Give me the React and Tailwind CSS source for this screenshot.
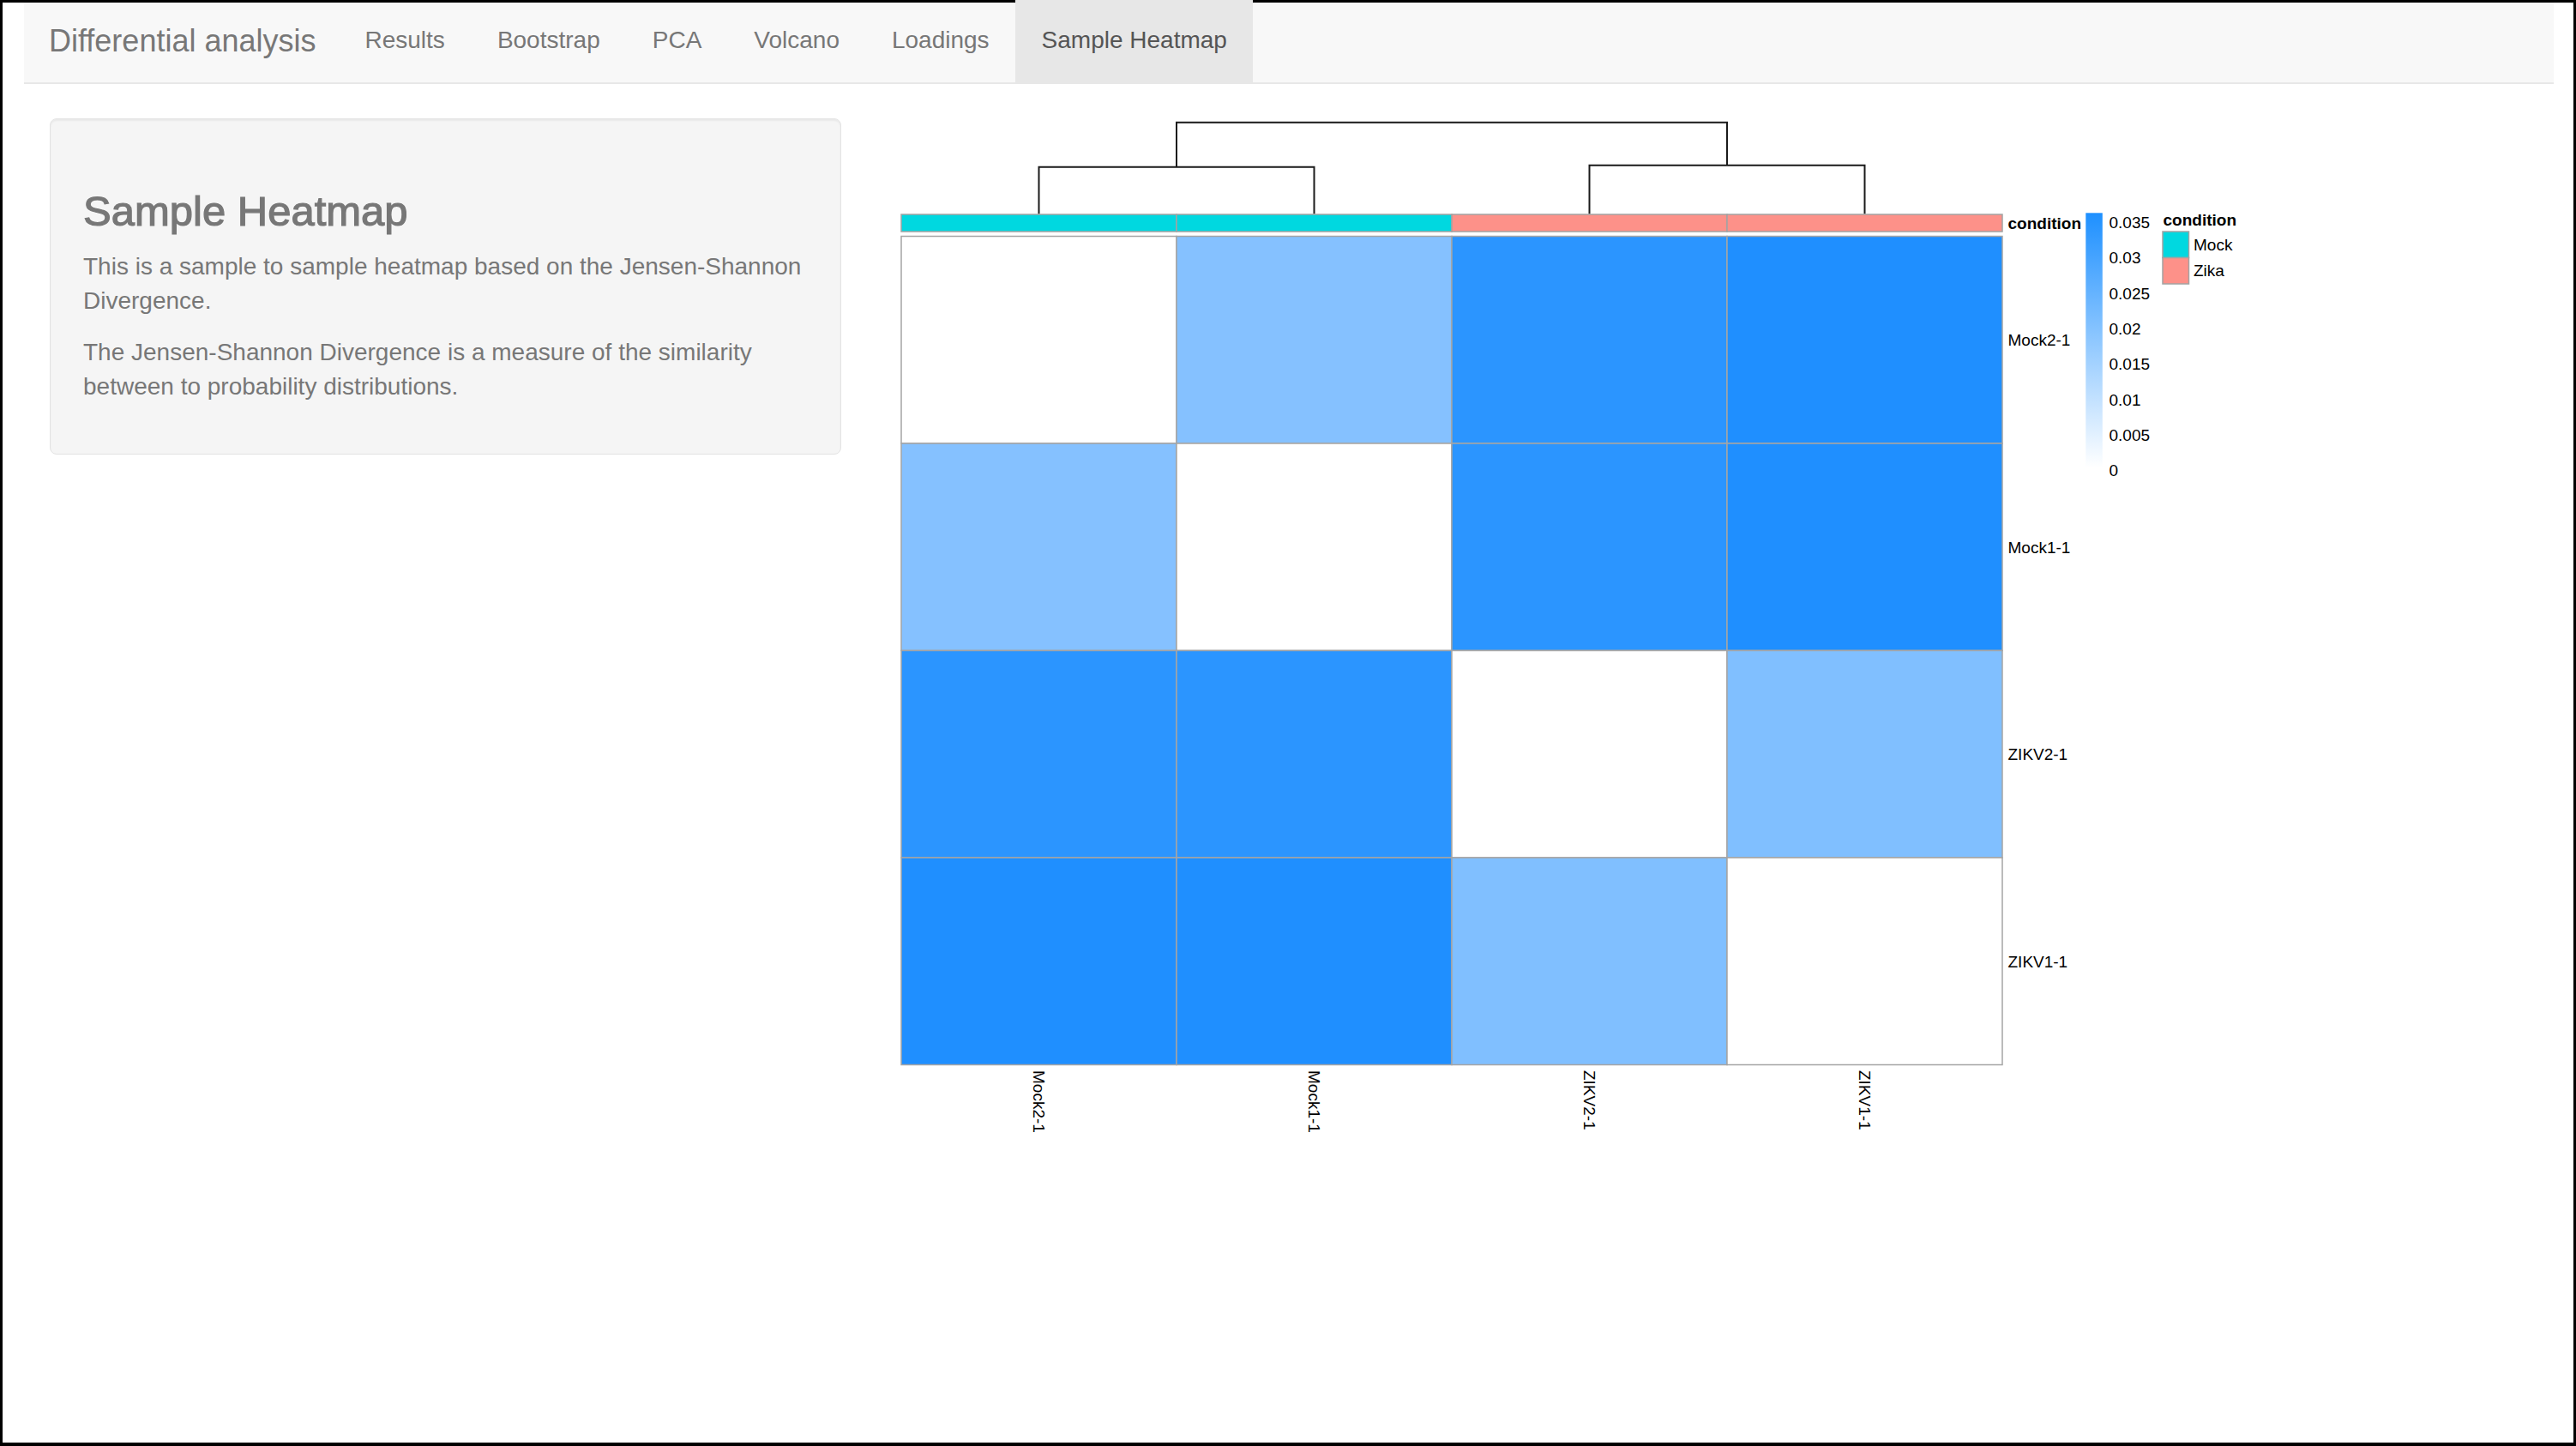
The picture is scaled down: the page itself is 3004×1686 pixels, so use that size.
import React from "react";

const TABS = ["Results", "Bootstrap", "PCA", "Volcano", "Loadings", "Sample Heatmap"];

const W = "#ffffff";
const L1 = "#85c1ff";
const M = "#2b95ff";
const D = "#1f8fff";
const L2 = "#80bfff";
const MATRIX = [
  [W, L1, M, D],
  [L1, W, M, D],
  [M, M, W, L2],
  [D, D, L2, W],
];
const NAMES = ["Mock2-1", "Mock1-1", "ZIKV2-1", "ZIKV1-1"];
const COND = ["#00d8e0", "#00d8e0", "#fd9189", "#fd9189"];
const TICKS = ["0.035", "0.03", "0.025", "0.02", "0.015", "0.01", "0.005", "0"];

const GX = 10;
const CW = 321;
const GY = 137.5;
const RH = 241.5;
const FONT = "'Liberation Sans', Arial, sans-serif";

function Heatmap() {
  const centers = [0, 1, 2, 3].map((i) => GX + CW * i + CW / 2);
  return (
    <svg width="1640" height="1200" viewBox="0 0 1640 1200" fontFamily={FONT}>
      <defs>
        <linearGradient id="cbar" x1="0" y1="0" x2="0" y2="1">
          <stop offset="0%" stopColor="#1e90ff" />
          <stop offset="100%" stopColor="#ffffff" />
        </linearGradient>
      </defs>

      {/* dendrogram */}
      <g stroke="#1a1a1a" strokeWidth="2" fill="none">
        <path d={`M${centers[0]},111.5 V56.7 H${centers[1]} V111.5`} />
        <path d={`M${centers[2]},111.5 V54.7 H${centers[3]} V111.5`} />
        <path d={`M${(centers[0] + centers[1]) / 2},56.7 V4.7 H${(centers[2] + centers[3]) / 2} V54.7`} />
      </g>

      {/* condition annotation bar */}
      {COND.map((c, i) => (
        <rect key={i} x={GX + CW * i} y={112} width={CW} height={20} fill={c} stroke="#a3a3a3" strokeWidth="1.5" />
      ))}
      <text x="1300.5" y="129.3" fontSize="19" fontWeight="bold" fill="#000">condition</text>

      {/* cells */}
      {MATRIX.map((row, r) =>
        row.map((c, k) => (
          <rect key={`${r}-${k}`} x={GX + CW * k} y={GY + RH * r} width={CW} height={RH} fill={c} stroke="#a5a5a5" strokeWidth="1.5" />
        ))
      )}

      {/* row labels */}
      {NAMES.map((n, r) => (
        <text key={n} x="1300.5" y={GY + RH * r + RH / 2 + 7} fontSize="19" fill="#000">{n}</text>
      ))}

      {/* column labels */}
      {NAMES.map((n, k) => (
        <text
          key={n}
          x={centers[k]}
          y="1110"
          fontSize="19"
          fill="#000"
          dominantBaseline="central"
          transform={`rotate(90 ${centers[k]} 1110)`}
        >
          {n}
        </text>
      ))}

      {/* colour scale */}
      <rect x="1391.3" y="110.3" width="19.5" height="297" fill="url(#cbar)" />
      {TICKS.map((t, i) => (
        <text key={t} x="1418.5" y={128 + i * 41.3} fontSize="19" fill="#000">{t}</text>
      ))}

      {/* annotation legend */}
      <text x="1481.5" y="124.7" fontSize="19" fontWeight="bold" fill="#000">condition</text>
      <rect x="1481" y="132" width="30.5" height="30.5" fill="#00d8e0" stroke="#a3a3a3" strokeWidth="1.5" />
      <rect x="1481" y="162.5" width="30.5" height="30.5" fill="#fd9189" stroke="#a3a3a3" strokeWidth="1.5" />
      <text x="1517" y="154.3" fontSize="19" fill="#000">Mock</text>
      <text x="1517" y="184.3" fontSize="19" fill="#000">Zika</text>
    </svg>
  );
}

export default function App() {
  return (
    <div className="w-[3004px] h-[1686px] bg-white border-[3px] border-b-4 border-black font-['Liberation_Sans',Arial,sans-serif]">
      <nav className="ml-[25px] mr-[23px] h-[95px] bg-[#f8f8f8] border-b-2 border-[#e7e7e7] flex items-start">
        <a className="block w-[367px] shrink-0 pl-[29px] pt-[25px] text-[36px] leading-[40px] text-[#777] whitespace-nowrap">
          Differential analysis
        </a>
        <ul className="flex items-start">
          {TABS.map((t) =>
            t === "Sample Heatmap" ? (
              <li key={t} className="relative -mt-[3px] h-[96px] px-[30.5px] pt-[27px] text-[28px] leading-[40px] text-[#555] bg-[#e7e7e7] whitespace-nowrap">
                {t}
              </li>
            ) : (
              <li key={t} className="px-[30.5px] pt-[24px] text-[28px] leading-[40px] text-[#777] whitespace-nowrap">
                {t}
              </li>
            )
          )}
        </ul>
      </nav>

      <div className="ml-[25px] mr-[23px] mt-[40px] flex items-start">
        <div className="w-[983px] shrink-0 px-[30px]">
          <div className="bg-[#f5f5f5] border border-[#e3e3e3] rounded-[8px] shadow-[inset_0_2px_2px_rgba(0,0,0,0.05)] px-[38px] pt-[38px] pb-[38px] text-[#777]">
            <h3 className="mt-[42px] mb-[18px] text-[49px] leading-[54px] font-medium [-webkit-text-stroke-width:1.2px] [-webkit-text-stroke-color:#777]">Sample Heatmap</h3>
            <p className="mb-[20px] text-[28px] leading-[40px]">
              This is a sample to sample heatmap based on the Jensen-Shannon Divergence.
            </p>
            <p className="mb-[20px] text-[28px] leading-[40px]">
              The Jensen-Shannon Divergence is a measure of the similarity between to probability distributions.
            </p>
          </div>
        </div>
        <div className="flex-1 px-[30px]">
          <Heatmap />
        </div>
      </div>
    </div>
  );
}
